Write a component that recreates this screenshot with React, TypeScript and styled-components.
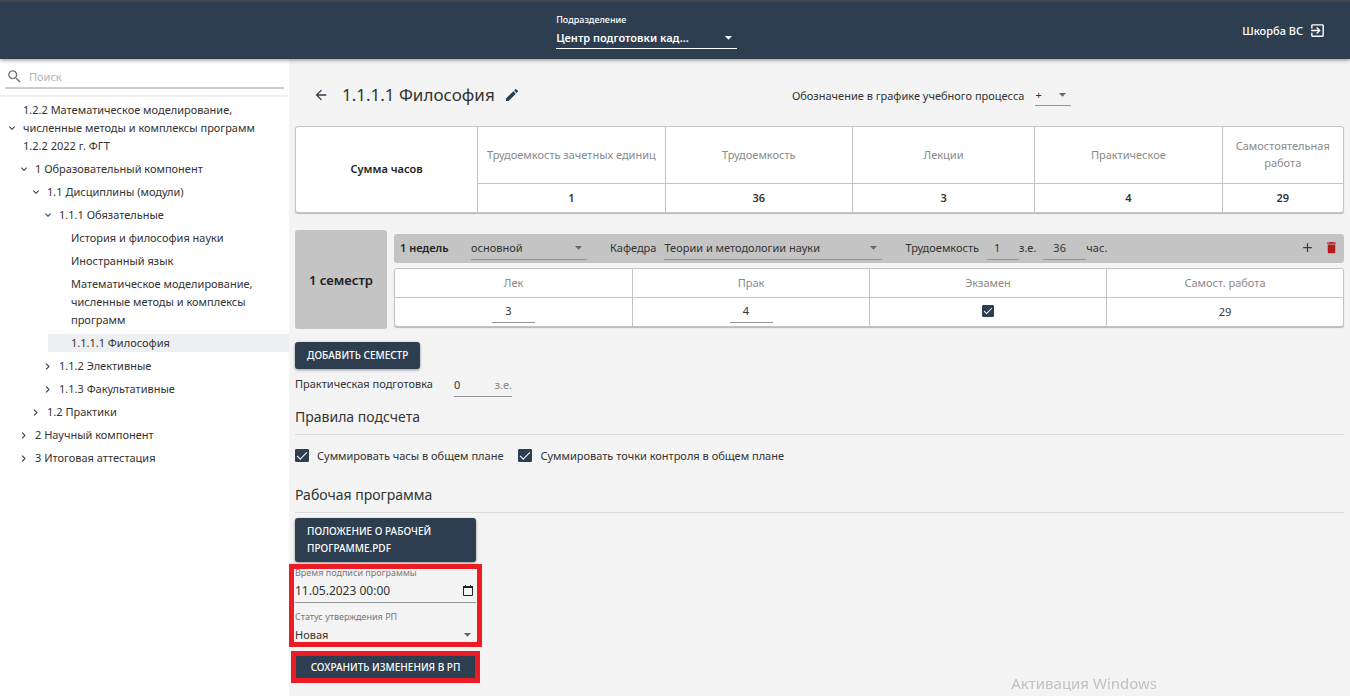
import React from "react";
import styled, { createGlobalStyle, css } from "styled-components";
import {
  MdAdd,
  MdArrowBack,
  MdArrowDropDown,
  MdChevronRight,
  MdDelete,
  MdExitToApp,
  MdExpandMore,
  MdModeEdit,
  MdSearch,
} from "react-icons/md";

const navy = "#2d3e50";
const ink = "#333";
const line = "#c4c4c4";
const rule = "#949494";
const alertRed = "#ed1c24";

const GlobalStyle = createGlobalStyle`
  *, *::before, *::after { box-sizing: border-box; }
  body {
    margin: 0;
    background: #f4f4f4;
    color: ${ink};
    font: 11px/17px "Noto Sans", "Open Sans", sans-serif;
  }
  button, input, select { font: inherit; color: inherit; }
  h1, h2, ul { margin: 0; padding: 0; font-weight: 400; }
  ul { list-style: none; }
`;

const Page = styled.div`
  display: flex;
  flex-direction: column;
  min-height: 100vh;
`;

/* ---------- Header ---------- */

const Header = styled.header`
  position: relative;
  display: flex;
  justify-content: space-between;
  align-items: center;
  height: 59px;
  padding: 0 24px 0 41.2%;
  border-top: 2px solid #47474b;
  background: ${navy};
  color: #fff;
  box-shadow: 0 1px 4px rgba(0, 0, 0, 0.45);
`;

const Division = styled.label`
  display: flex;
  flex-direction: column;
  width: 181px;
  font-weight: 600;
`;

const DivisionCaption = styled.span`
  font-size: 9px;
  font-weight: 500;
  line-height: 14px;
`;

const UserButton = styled.button`
  display: flex;
  align-items: center;
  gap: 6px;
  padding: 0;
  border: 0;
  background: none;
  font-weight: 500;
  cursor: pointer;
`;

/* ---------- Form fields ---------- */

const SelectBox = styled.span<{ $width?: string; $height?: number; $tone?: string; $bare?: boolean }>`
  display: inline-grid;
  grid-template-columns: minmax(0, 1fr);
  align-items: center;
  width: ${(p) => p.$width ?? "100%"};
  height: ${(p) => p.$height ?? 24}px;
  border-bottom: ${(p) => (p.$bare ? "0" : `1px solid ${p.$tone ?? rule}`)};

  select,
  svg {
    grid-area: 1 / 1;
  }
  svg {
    justify-self: end;
    pointer-events: none;
    color: ${(p) => p.$tone ?? "#666"};
  }
`;

const Select = styled.select`
  width: 100%;
  padding: 0;
  border: 0;
  outline: 0;
  background: none;
  appearance: none;
  text-overflow: ellipsis;

  option {
    color: ${ink};
  }
`;

const Field = styled.input<{ $width: number; $pad?: string; $center?: boolean }>`
  width: ${(p) => p.$width}px;
  height: 24px;
  padding: ${(p) => p.$pad ?? "0"};
  border: 0;
  border-bottom: 1px solid ${rule};
  border-radius: 0;
  outline: 0;
  background: none;
  text-align: ${(p) => (p.$center ? "center" : "left")};
  vertical-align: top;
`;

const Check = styled.input`
  display: grid;
  place-content: center;
  width: 14px;
  height: 13px;
  margin: 0;
  border: 1px solid ${navy};
  border-radius: 1px;
  appearance: none;

  &:checked {
    background: ${navy};
  }
  &:checked::before {
    content: "";
    width: 10px;
    height: 5px;
    border: solid #fff;
    border-width: 0 0 1px 1px;
    transform: translateY(-1px) rotate(-45deg);
  }
`;

const SolidButton = styled.button`
  display: block;
  padding: 5px 12px;
  border: 0;
  border-radius: 3px;
  background: ${navy};
  color: #fff;
  font-size: 10px;
  font-weight: 500;
  text-align: left;
  text-transform: uppercase;
  box-shadow: 0 1px 3px rgba(0, 0, 0, 0.4);
  cursor: pointer;
`;

const IconButton = styled.button<{ $color?: string }>`
  display: flex;
  padding: 0;
  border: 0;
  background: none;
  color: ${(p) => p.$color ?? navy};
  cursor: pointer;
`;

/* ---------- Sidebar ---------- */

const Body = styled.div`
  display: flex;
  flex: 1;
`;

const Sidebar = styled.aside`
  flex: 0 0 289px;
  background: #fff;
`;

const SearchBar = styled.div`
  padding: 6px 5px 6px;
  border-bottom: 2px solid #efefef;
`;

const SearchField = styled.label`
  display: flex;
  align-items: center;
  gap: 6px;
  height: 24px;
  padding-left: 1px;
  border-bottom: 2px solid #cdcdcd;
  color: #757575;

  input {
    flex: 1;
    min-width: 0;
    padding: 0;
    border: 0;
    outline: 0;
    background: none;
  }
  input::placeholder {
    color: #b5b5b5;
  }
`;

const Tree = styled.ul`
  display: flex;
  flex-direction: column;
  gap: 5px;
  padding-top: 5px;
  line-height: 18px;

  & & {
    margin-left: 12px;
  }
`;

const TreeNav = styled.nav`
  & > ul {
    padding-top: 4px;
  }
`;

const TreeRow = styled.div<{ $active?: boolean }>`
  display: flex;
  align-items: center;
  background: ${(p) => (p.$active ? "#eeeff1" : "none")};
`;

const Toggle = styled.button`
  display: flex;
  justify-content: center;
  width: 23px;
  padding: 0;
  border: 0;
  background: none;
  color: ${navy};
`;

const TreeLink = styled.a<{ $leaf?: boolean }>`
  flex: 1;
  padding: 0 20px 0 ${(p) => (p.$leaf ? 23 : 0)}px;
  color: ${ink};
  text-decoration: none;
`;

/* ---------- Main ---------- */

const Main = styled.main`
  flex: 1;
  min-width: 0;
  padding: 18px 6px 12px;
`;

const TitleRow = styled.div`
  display: grid;
  grid-template-columns: 9fr 10fr;
  align-items: center;
  height: 36px;
  margin-bottom: 13px;
`;

const TitleGroup = styled.div`
  display: flex;
  align-items: center;
  gap: 9px;
  padding-left: 18px;

  h1 {
    padding-left: 4px;
    font-size: 17px;
    line-height: 24px;
  }
`;

const Designation = styled.label`
  display: flex;
  align-items: center;
  gap: 11px;
`;

const Table = styled.table<{ $summary?: boolean }>`
  width: 100%;
  table-layout: fixed;
  border-collapse: separate;
  border-spacing: 0;
  border: 1px solid ${line};
  border-radius: 3px;
  background: #fff;
  text-align: center;
  box-shadow: 0 1px 1px rgba(0, 0, 0, 0.25);

  th,
  td {
    height: 29px;
    padding: 0 6px 2px;
    border-left: 1px solid ${line};
    font-weight: 400;
  }
  tr:first-child > :first-child {
    border-left: 0;
  }
  th {
    color: #8a8a8a;
  }
  td {
    border-top: 1px solid ${line};
  }
  ${(p) =>
    p.$summary
      ? css`
          th {
            height: 56px;
          }
          td {
            font-weight: 600;
          }
          th[rowspan] {
            color: #222;
            font-weight: 600;
          }
        `
      : css`
          th,
          td {
            padding: 0 0 2px;
          }
          th {
            height: 28px;
          }
          tr > :first-child {
            border-left: 0;
          }
        `}
`;

const CellCheck = styled(Check)`
  width: 12px;
  height: 12px;
  margin: 0 auto;

  &:checked::before {
    width: 8px;
    height: 4px;
  }
`;

const Semester = styled.section`
  display: flex;
  gap: 7px;
  margin: 17px 0 13px;
`;

const SemesterName = styled.div`
  display: grid;
  place-items: center;
  flex: 0 0 92px;
  min-height: 99px;
  padding-top: 2px;
  border-radius: 3px;
  background: ${line};
  color: #222;
  font-size: 13px;
  font-weight: 600;
`;

const SemesterBody = styled.div`
  flex: 1;
  min-width: 0;
  padding-top: 4px;
`;

const SemesterBar = styled.div`
  display: flex;
  align-items: center;
  height: 29px;
  margin-bottom: 5px;
  padding: 0 5px 2px 6px;
  border-radius: 3px;
  background: ${line};

  strong {
    width: 71px;
    color: #222;
    font-weight: 600;
  }
`;

const BarLabel = styled.label`
  display: flex;
  align-items: center;
  gap: 8px;
  margin-left: 23px;
`;

const BarUnit = styled.span`
  margin-right: 7px;
`;

const BarActions = styled.div`
  display: flex;
  gap: 9px;
  margin-left: auto;
`;

const Practice = styled.div`
  display: flex;
  align-items: center;
  gap: 21px;
  margin-top: 4px;

  label {
    padding-bottom: 3px;
  }
`;

const Unit = styled.span`
  display: flex;
  align-items: center;
  width: 58px;
  height: 24px;
  border-bottom: 1px solid ${rule};
  color: #888;

  input {
    flex: 1;
    min-width: 0;
    padding: 0;
    border: 0;
    outline: 0;
    background: none;
    color: ${ink};
  }
`;

const SectionTitle = styled.h2`
  padding: 9px 0 7px;
  border-bottom: 1px solid #dadada;
  font-size: 14px;
  line-height: 21px;
`;

const Checks = styled.div`
  display: flex;
  gap: 15px;
  padding: 12px 0 11px;
`;

const CheckLabel = styled.label`
  display: flex;
  align-items: center;
  gap: 8px;
`;

const Program = styled.div`
  display: flex;
  flex-direction: column;
  gap: 10px;
  width: 181px;
  padding-top: 5px;
`;

const Approval = styled.div`
  display: flex;
  flex-direction: column;
  gap: 8px;
`;

/* Red frame that calls out a group of controls */
const Highlight = styled.div<{ $inset: string }>`
  position: relative;

  &::after {
    content: "";
    position: absolute;
    inset: ${(p) => p.$inset};
    border: 5px solid ${alertRed};
    pointer-events: none;
  }
`;

const StackField = styled.label`
  display: flex;
  flex-direction: column;
`;

const Caption = styled.span`
  color: #777;
  font-size: 9px;
  line-height: 12px;
`;

const DateBox = styled.span`
  display: flex;
  align-items: center;
  height: 24px;
  border-bottom: 1px solid ${rule};
  font-size: 12px;

  input {
    flex: 1;
    min-width: 0;
    padding: 0;
    border: 0;
    outline: 0;
    background: none;
  }
`;

const Signing = styled.div`
  display: flex;
  flex-direction: column;
  gap: 5px;
`;

const SaveButton = styled(SolidButton)`
  width: 100%;
  height: 24px;
  padding: 0 12px;
  text-align: center;
`;

const Watermark = styled.p`
  position: fixed;
  right: 193px;
  bottom: 2px;
  margin: 0;
  color: #c2c2c2;
  font: 15px/22px "Noto Sans", sans-serif;
`;

/* ---------- Data ---------- */

type Node = { label: string; active?: boolean; open?: boolean; children?: Node[] };

const plan: Node[] = [
  {
    label: "1.2.2 Математическое моделирование, численные методы и комплексы программ 1.2.2 2022 г. ФГТ",
    open: true,
    children: [
      {
        label: "1 Образовательный компонент",
        open: true,
        children: [
          {
            label: "1.1 Дисциплины (модули)",
            open: true,
            children: [
              {
                label: "1.1.1 Обязательные",
                open: true,
                children: [
                  { label: "История и философия науки" },
                  { label: "Иностранный язык" },
                  { label: "Математическое моделирование, численные методы и комплексы программ" },
                  { label: "1.1.1.1 Философия", active: true },
                ],
              },
              { label: "1.1.2 Элективные", children: [] },
              { label: "1.1.3 Факультативные", children: [] },
            ],
          },
          { label: "1.2 Практики", children: [] },
        ],
      },
      { label: "2 Научный компонент", children: [] },
      { label: "3 Итоговая аттестация", children: [] },
    ],
  },
];

const summary = [
  { name: "Трудоемкость зачетных единиц", value: 1 },
  { name: "Трудоемкость", value: 36 },
  { name: "Лекции", value: 3 },
  { name: "Практическое", value: 4 },
  { name: "Самостоятельная работа", value: 29 },
];

const summaryWidths = ["17.3%", "17.9%", "17.9%", "17.4%", "17.9%", "11.6%"];

function Branch({ nodes }: { nodes: Node[] }) {
  return (
    <Tree>
      {nodes.map((node) => (
        <li key={node.label}>
          <TreeRow $active={node.active}>
            {node.children && (
              <Toggle type="button" aria-label={node.open ? "Свернуть" : "Развернуть"}>
                {node.open ? <MdExpandMore size={12} /> : <MdChevronRight size={13} />}
              </Toggle>
            )}
            <TreeLink href="#" $leaf={!node.children}>
              {node.label}
            </TreeLink>
          </TreeRow>
          {node.open && node.children && <Branch nodes={node.children} />}
        </li>
      ))}
    </Tree>
  );
}

function Dropdown({
  value,
  label,
  ...box
}: {
  value: string;
  label?: string;
  $width?: string;
  $height?: number;
  $tone?: string;
  $bare?: boolean;
}) {
  return (
    <SelectBox {...box}>
      <Select aria-label={label} defaultValue={value}>
        <option>{value}</option>
      </Select>
      <MdArrowDropDown size={17} />
    </SelectBox>
  );
}

export default function App() {
  return (
    <Page>
      <GlobalStyle />
      <Header>
        <Division>
          <DivisionCaption>Подразделение</DivisionCaption>
          <Dropdown value="Центр подготовки кад..." $tone="#fff" $height={22} />
        </Division>
        <UserButton type="button">
          Шкорба ВС <MdExitToApp size={17} />
        </UserButton>
      </Header>

      <Body>
        <Sidebar>
          <SearchBar>
            <SearchField>
              <MdSearch size={17} />
              <input type="search" placeholder="Поиск" aria-label="Поиск" />
            </SearchField>
          </SearchBar>
          <TreeNav>
            <Branch nodes={plan} />
          </TreeNav>
        </Sidebar>

        <Main>
          <TitleRow>
            <TitleGroup>
              <IconButton type="button" aria-label="Назад">
                <MdArrowBack size={16} />
              </IconButton>
              <h1>1.1.1.1 Философия</h1>
              <IconButton type="button" aria-label="Редактировать">
                <MdModeEdit size={16} />
              </IconButton>
            </TitleGroup>
            <Designation>
              Обозначение в графике учебного процесса
              <Dropdown value="+" $width="36px" $height={22} />
            </Designation>
          </TitleRow>

          <Table $summary>
            <colgroup>
              {summaryWidths.map((width, i) => (
                <col key={i} style={{ width }} />
              ))}
            </colgroup>
            <tbody>
              <tr>
                <th rowSpan={2}>Сумма часов</th>
                {summary.map((item) => (
                  <th key={item.name}>{item.name}</th>
                ))}
              </tr>
              <tr>
                {summary.map((item) => (
                  <td key={item.name}>{item.value}</td>
                ))}
              </tr>
            </tbody>
          </Table>

          <Semester>
            <SemesterName>1 семестр</SemesterName>
            <SemesterBody>
              <SemesterBar>
                <strong>1 недель</strong>
                <Dropdown value="основной" label="Вид" $width="116px" />
                <BarLabel>
                  Кафедра
                  <Dropdown value="Теории и методологии науки" $width="218px" />
                </BarLabel>
                <BarLabel>
                  Трудоемкость
                  <Field $width={32} $pad="0 0 0 7px" defaultValue="1" />
                </BarLabel>
                <BarUnit>з.е.</BarUnit>
                <Field $width={43} $pad="0 0 0 10px" defaultValue="36" aria-label="Часы" />
                <BarUnit>час.</BarUnit>
                <BarActions>
                  <IconButton type="button" aria-label="Добавить">
                    <MdAdd size={15} />
                  </IconButton>
                  <IconButton type="button" aria-label="Удалить" $color="#b71c1c">
                    <MdDelete size={15} />
                  </IconButton>
                </BarActions>
              </SemesterBar>
              <Table>
                <thead>
                  <tr>
                    <th>Лек</th>
                    <th>Прак</th>
                    <th>Экзамен</th>
                    <th>Самост. работа</th>
                  </tr>
                </thead>
                <tbody>
                  <tr>
                    <td>
                      <Field $width={43} $pad="0 10px 0 0" $center defaultValue="3" aria-label="Лек" />
                    </td>
                    <td>
                      <Field $width={43} $pad="0 10px 0 0" $center defaultValue="4" aria-label="Прак" />
                    </td>
                    <td>
                      <CellCheck type="checkbox" defaultChecked aria-label="Экзамен" />
                    </td>
                    <td>29</td>
                  </tr>
                </tbody>
              </Table>
            </SemesterBody>
          </Semester>

          <SolidButton type="button">Добавить семестр</SolidButton>

          <Practice>
            <label htmlFor="practice">Практическая подготовка</label>
            <Unit>
              <input id="practice" defaultValue="0" />
              з.е.
            </Unit>
          </Practice>

          <SectionTitle>Правила подсчета</SectionTitle>
          <Checks>
            <CheckLabel>
              <Check type="checkbox" defaultChecked />
              Суммировать часы в общем плане
            </CheckLabel>
            <CheckLabel>
              <Check type="checkbox" defaultChecked />
              Суммировать точки контроля в общем плане
            </CheckLabel>
          </Checks>

          <SectionTitle>Рабочая программа</SectionTitle>
          <Program>
            <Signing>
              <SolidButton type="button">Положение о рабочей программе.pdf</SolidButton>
              <Highlight $inset="-3px -6px -2px -6px">
                <Approval>
                  <StackField>
                    <Caption>Время подписи программы</Caption>
                    <DateBox>
                      <input defaultValue="11.05.2023 00:00" />
                      <svg width="16" height="16" viewBox="0 0 16 16" fill="none" stroke="#222" aria-hidden="true">
                        <path d="M3.5 4.5h9v8h-9z" />
                        <path d="M3 4h10" strokeWidth="2" />
                        <path d="M5.5 2v2M10.5 2v2" />
                      </svg>
                    </DateBox>
                  </StackField>
                  <StackField>
                    <Caption>Статус утверждения РП</Caption>
                    <Dropdown value="Новая" $bare $height={22} />
                  </StackField>
                </Approval>
              </Highlight>
            </Signing>
            <Highlight $inset="-4px">
              <SaveButton type="button">Сохранить изменения в РП</SaveButton>
            </Highlight>
          </Program>
        </Main>
      </Body>
      <Watermark>Активация Windows</Watermark>
    </Page>
  );
}
